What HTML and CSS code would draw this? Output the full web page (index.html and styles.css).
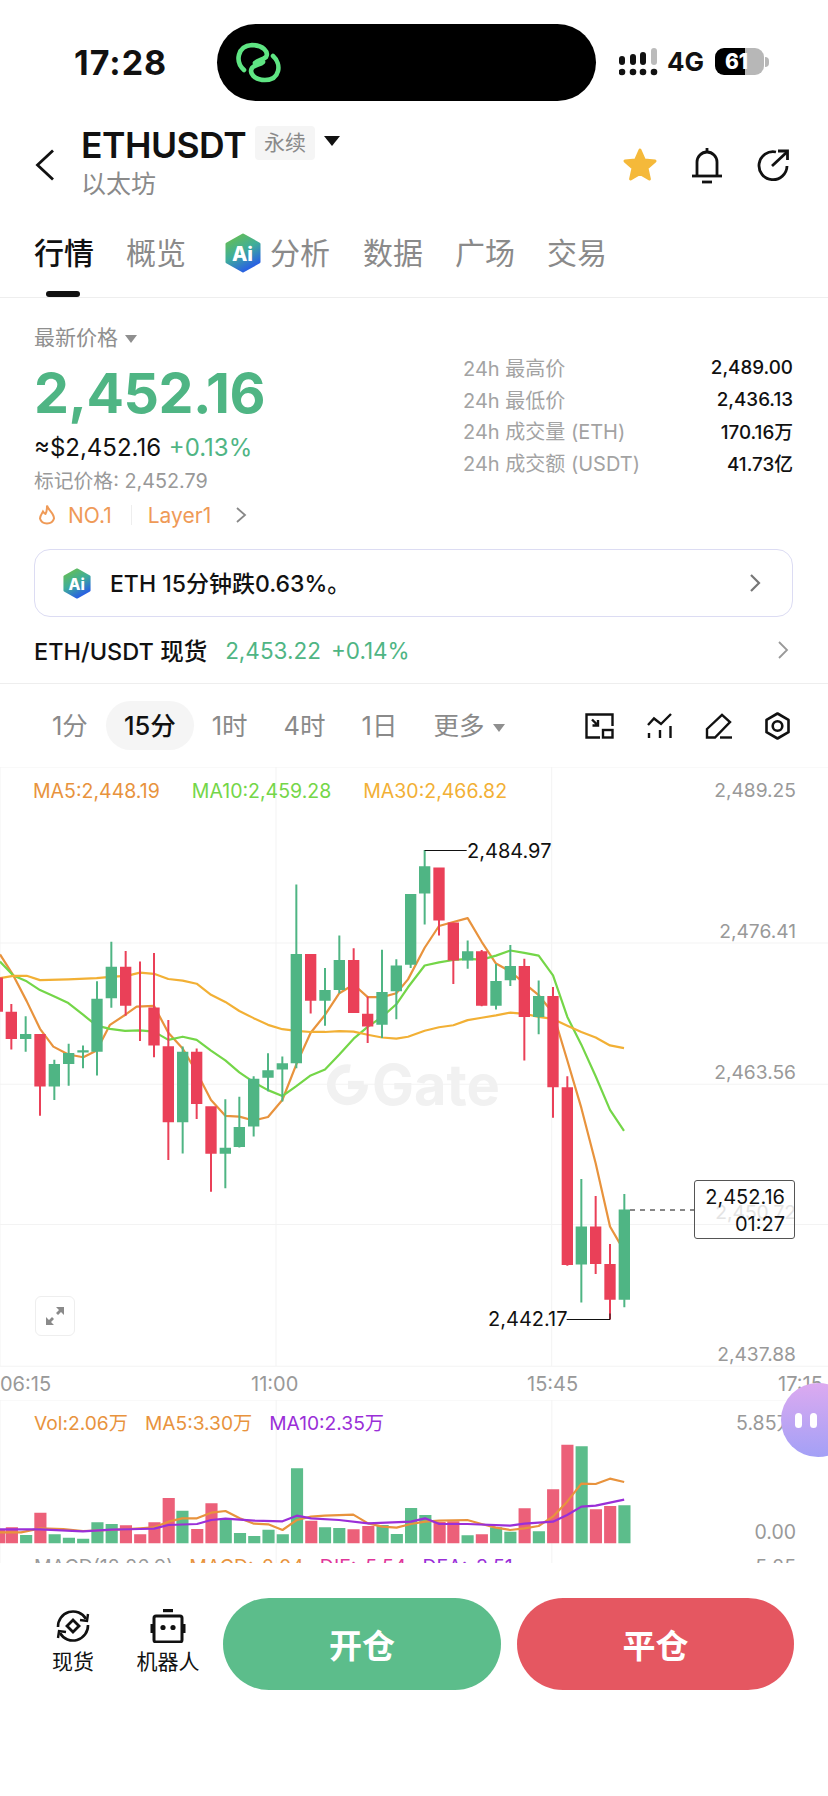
FILE: index.html
```html
<!DOCTYPE html>
<html lang="zh-CN">
<head>
    <meta charset="UTF-8">
    <meta name="viewport" content="width=device-width, initial-scale=1.0">
    <title>ETHUSDT</title>
    <link rel="stylesheet" href="styles.css">
</head>
<body>

    <svg class="defs" width="0" height="0">
        <defs>
            <linearGradient id="aiGrad" x1="0" y1="0" x2="0.5" y2="1">
                <stop offset="0" stop-color="#6cc04a"/>
                <stop offset="0.55" stop-color="#3fae9a"/>
                <stop offset="1" stop-color="#2a63e0"/>
            </linearGradient>
            <symbol id="aiIcon" viewBox="0 0 36 40">
                <path d="M18 2 L34 11 V29 L18 38 L2 29 V11 Z" fill="url(#aiGrad)" stroke="url(#aiGrad)" stroke-width="3" stroke-linejoin="round"/>
                <text x="17.5" y="28" class="ai-text">Ai</text>
            </symbol>
        </defs>
    </svg>

    <div class="status">
        <span class="clock">17:28</span>
        <div class="island">
            <svg width="50" height="42" viewBox="0 0 50 42" fill="none" stroke="#5fe583" stroke-width="4.6" stroke-linecap="round">
                <path d="M10 28 C1 20 3 4 18 3 C29 3 35 10 32 15 C29 18 24 18 21 21"/>
                <path d="M39 14 C48 22 46 38 31 38 C20 38 15 31 18 26 C21 22 26 23 29 20"/>
            </svg>
        </div>
        <div class="status-right">
            <svg width="40" height="28" viewBox="0 0 40 28" fill="#111">
                <rect x="0" y="8" width="6" height="9" rx="3"/><rect x="11" y="6" width="6" height="11" rx="3"/>
                <rect x="21" y="4" width="6" height="13" rx="3"/><rect x="32" y="0" width="6" height="17" rx="3" fill="#bbb"/>
                <circle cx="3" cy="24" r="3.3"/><circle cx="14" cy="24" r="3.3"/>
                <circle cx="24" cy="24" r="3.3"/><circle cx="35" cy="24" r="3.3"/>
            </svg>
            <span class="net">4G</span>
            <span class="battery">61</span>
            <span class="battery-nub"></span>
        </div>
    </div>

    <div class="header">
        <svg class="back" width="22" height="32" viewBox="0 0 22 32" fill="none" stroke="#111" stroke-width="2.8">
            <path d="M19 1.5 L3.5 16 L19 30.5"/>
        </svg>
        <div class="title-block">
            <div class="title-line">
                <span class="symbol">ETHUSDT</span>
                <span class="tag">永续</span>
                <span class="tri"></span>
            </div>
            <div class="coin-name">以太坊</div>
        </div>
        <div class="header-icons">
            <svg width="36" height="36" viewBox="0 0 36 36" fill="#f5b93a" stroke="#f5b93a" stroke-width="3" stroke-linejoin="round">
                <path d="M18 3 L22.4 13 L33 14 L25 21 L27.4 32 L18 26.4 L8.6 32 L11 21 L3 14 L13.6 13 Z"/>
            </svg>
            <svg width="32" height="37" viewBox="0 0 32 37" fill="none" stroke="#111" stroke-width="2.8">
                <path d="M6 28 V15 a10 10 0 0 1 20 0 V28"/>
                <path d="M1 29 H31"/>
                <path d="M11 35 H21"/>
                <path d="M16 1 V4"/>
            </svg>
            <svg width="34" height="34" viewBox="0 0 34 34" fill="none" stroke="#111" stroke-width="2.8">
                <path d="M20 4 A14 14 0 1 0 31 18"/>
                <path d="M16 18 L31 4"/>
                <path d="M22 3 H31.5 V12"/>
            </svg>
        </div>
    </div>

    <div class="tabs">
        <span class="tab active">行情</span>
        <span class="tab">概览</span>
        <span class="tab tab-ai">
            <svg width="36" height="40"><use href="#aiIcon"/></svg>
            分析
        </span>
        <span class="tab">数据</span>
        <span class="tab">广场</span>
        <span class="tab">交易</span>
    </div>

    <div class="price-section">
        <div class="price-left">
            <div class="last-label">最新价格 <span class="tri-small"></span></div>
            <div class="last-price">2,452.16</div>
            <div class="usd-line">≈$2,452.16 <span class="green">+0.13%</span></div>
            <div class="mark-price">标记价格: 2,452.79</div>
            <div class="rank-line">
                <svg width="20" height="22" viewBox="0 0 20 22" fill="none" stroke="#ef9a57" stroke-width="2">
                    <path d="M10 1.5 C11 6 17 9 17 14.5 A7.2 6.5 0 0 1 3 14.5 C3 11.5 5 9.5 6 7.5 C7 9 7.5 10 8.5 10 C10 8 10 4.5 10 1.5 Z"/>
                </svg>
                <span>NO.1</span>
                <span class="rank-sep"></span>
                <span>Layer1</span>
                <svg class="rank-arrow" width="12" height="18" viewBox="0 0 12 18" fill="none" stroke="#888" stroke-width="1.8">
                    <path d="M2 2 L10 9 L2 16"/>
                </svg>
            </div>
        </div>
        <div class="stats">
            <div class="stat"><span>24h 最高价</span><b>2,489.00</b></div>
            <div class="stat"><span>24h 最低价</span><b>2,436.13</b></div>
            <div class="stat"><span>24h 成交量 (ETH)</span><b>170.16万</b></div>
            <div class="stat"><span>24h 成交额 (USDT)</span><b>41.73亿</b></div>
        </div>
    </div>

    <div class="ai-banner">
        <svg width="28" height="31"><use href="#aiIcon"/></svg>
        <span class="ai-msg">ETH 15分钟跌0.63%。</span>
        <svg width="12" height="20" viewBox="0 0 12 20" fill="none" stroke="#777" stroke-width="2.2">
            <path d="M2 2 L10 10 L2 18"/>
        </svg>
    </div>

    <div class="spot-row">
        <span class="spot-name">ETH/USDT 现货</span>
        <span class="green spot-price">2,453.22</span>
        <span class="green spot-price">+0.14%</span>
        <svg class="spot-arrow" width="12" height="20" viewBox="0 0 12 20" fill="none" stroke="#999" stroke-width="1.8">
            <path d="M2 2 L10 10 L2 18"/>
        </svg>
    </div>

    <div class="timeframes">
        <span class="tf">1分</span>
        <span class="tf current">15分</span>
        <span class="tf">1时</span>
        <span class="tf">4时</span>
        <span class="tf">1日</span>
        <span class="tf">更多 <span class="tri-small"></span></span>
        <div class="tools">
            <svg width="29" height="26" viewBox="0 0 29 26" fill="none" stroke="#111" stroke-width="2.4">
                <path d="M15 24.5 H1.5 V1.5 H27.5 V13"/>
                <rect x="18" y="17" width="9.5" height="7.5"/>
                <path d="M7 6.5 L13 12.5 M13 7 V12.5 H7.5"/>
            </svg>
            <svg width="25" height="26" viewBox="0 0 25 26" fill="none" stroke="#111" stroke-width="2.4">
                <path d="M1 12 L7 5.5 L14 11 L24 1"/>
                <path d="M2 25 V20 M13 25 V17 M23.5 25 V13"/>
            </svg>
            <svg width="27" height="26" viewBox="0 0 27 26" fill="none" stroke="#111" stroke-width="2.4">
                <path d="M2 16 L17 1.8 L25 9 L10 24.5 H2 Z"/>
                <path d="M15 24.5 H27"/>
            </svg>
            <svg width="25" height="28" viewBox="0 0 25 28" fill="none" stroke="#111" stroke-width="2.6">
                <path d="M12.5 1.5 L23.5 7.8 V20.2 L12.5 26.5 L1.5 20.2 V7.8 Z" stroke-linejoin="round"/>
                <circle cx="12.5" cy="14" r="4.8"/>
            </svg>
        </div>
    </div>

    <div class="chart-area">
        <div class="kline">
            <svg class="kline-svg" viewBox="0 18 2484 1550" preserveAspectRatio="none">
                <path class="grid-line" d="M0 463H2484M0 820H2484M0 1175H2484M0 18H2484M0 1533H2484M828 18V1533M1655 18V1533M0 18V1533"/>
                <path class="ma ma5" d="M0 492L40 545L80 610L120 680L160 725L205 745L250 752L290 735L330 670L375 645L410 624L462 622L505 690L548 730L590 790L633 860L676 900L718 902L761 912L804 903L847 860L889 770L932 690L975 645L1018 590L1061 568L1103 600L1146 600L1189 590L1224 555L1274 475L1317 420L1360 410L1403 400L1445 460L1488 515L1531 535L1573 565L1616 595L1659 640L1702 760L1744 880L1787 1020L1830 1180L1859 1222"/>
                <path class="ma ma10" d="M0 510L40 545L80 560L120 582L160 597L205 615L250 645L290 672L330 680L375 685L420 684L462 687L505 708L548 700L590 708L633 735L676 760L718 790L761 815L804 835L847 850L889 825L932 798L975 783L1018 745L1061 705L1103 675L1146 650L1189 618L1224 575L1274 520L1317 512L1360 506L1403 503L1445 505L1488 495L1531 482L1573 488L1616 495L1659 545L1702 650L1744 720L1787 800L1830 885L1872 938"/>
                <path class="ma ma30" d="M0 552L40 546L80 546L120 557L205 555L290 552L340 548L380 546L420 538L462 541L505 554L548 558L590 566L633 594L676 612L718 635L761 653L804 670L847 681L889 685L932 688L975 688L1018 686L1061 687L1103 695L1146 702L1189 705L1224 700L1274 685L1317 676L1360 671L1403 658L1445 652L1488 646L1531 639L1573 642L1616 650L1659 655L1702 672L1744 688L1787 702L1830 722L1872 729"/>
                <path class="candle-down" d="M-8 550h17V637h-17zM17 637h34V706h-34zM31 617h6V732h-6zM103 693h34V826h-34zM117 693h6V900h-6zM360 523h34V622h-34zM374 483h6V647h-6zM417 510h6V711h-6zM445 626h34V722h-34zM459 488h6V752h-6zM488 724h34V916h-34zM502 658h6V1012h-6zM573 738h34V870h-34zM587 730h6V908h-6zM616 876h34V996h-34zM630 876h6V1092h-6zM915 491h34V609h-34zM929 491h6V641h-6zM1044 506h34V640h-34zM1058 476h6V640h-6zM1086 642h34V674h-34zM1100 598h6V716h-6zM1300 272h34V406h-34zM1314 272h6V444h-6zM1343 411h34V507h-34zM1357 411h6V567h-6zM1428 484h34V622h-34zM1442 481h6V623h-6zM1556 521h34V650h-34zM1570 503h6V760h-6zM1642 597h34V828h-34zM1656 574h6V905h-6zM1685 828h34V1277h-34zM1699 800h6V1279h-6zM1770 1180h34V1275h-34zM1784 1103h6V1300h-6zM1813 1275h34V1365h-34zM1827 1224h6V1415h-6z"/>
                <path class="candle-up" d="M60 693h34V706h-34zM74 648h6V738h-6zM146 769h34V826h-34zM160 758h6V860h-6zM189 741h34V769h-34zM203 718h6V824h-6zM232 734h34V740h-34zM246 722h6V780h-6zM274 604h34V738h-34zM288 560h6V798h-6zM317 523h34V603h-34zM331 460h6V627h-6zM531 738h34V916h-34zM545 725h6V995h-6zM659 981h34V996h-34zM673 858h6V1083h-6zM701 928h34V979h-34zM715 852h6V980h-6zM744 806h34V927h-34zM758 800h6V952h-6zM787 785h34V804h-34zM801 742h6V838h-6zM830 767h34V783h-34zM844 750h6V864h-6zM872 491h34V767h-34zM886 315h6V780h-6zM958 582h34V609h-34zM972 526h6V672h-6zM1001 506h34V582h-34zM1015 444h6V590h-6zM1129 587h34V670h-34zM1143 480h6V703h-6zM1172 520h34V585h-34zM1186 504h6V656h-6zM1215 339h34V518h-34zM1229 339h6V526h-6zM1257 269h34V338h-34zM1271 228h6V416h-6zM1386 484h34V507h-34zM1400 457h6V528h-6zM1471 559h34V622h-34zM1485 516h6V631h-6zM1514 521h34V557h-34zM1528 468h6V572h-6zM1599 597h34V650h-34zM1613 558h6V694h-6zM1727 1180h34V1276h-34zM1741 1060h6V1372h-6zM1856 1137h34V1365h-34zM1870 1098h6V1384h-6z"/>
                <path class="leader" d="M1274 229H1400M1830 1415H1700M1830 1415V1400"/>
                <path class="dash" d="M1890 1138H2085"/>
            </svg>

            <div class="watermark">
                <svg width="42" height="42" viewBox="0 0 40 40" fill="none" stroke="#f1f1f1" stroke-width="8">
                    <path d="M35 20 A15.5 15.5 0 1 1 22 4.5"/>
                    <path d="M20 20 H35"/>
                </svg>
                <span>Gate</span>
            </div>

            <div class="ma-legend">
                <span class="c-ma5">MA5:2,448.19</span>
                <span class="c-ma10">MA10:2,459.28</span>
                <span class="c-ma30">MA30:2,466.82</span>
            </div>

            <span class="axis-y y1">2,489.25</span>
            <span class="axis-y y2">2,476.41</span>
            <span class="axis-y y3">2,463.56</span>
            <span class="axis-y y4">2,450.72</span>
            <span class="axis-y y5">2,437.88</span>

            <span class="extreme high">2,484.97</span>
            <span class="extreme low">2,442.17</span>

            <div class="last-box">
                <span>2,452.16</span>
                <span>01:27</span>
            </div>

            <div class="expand">
                <svg width="20" height="20" viewBox="0 0 20 20" fill="#8a8a8a">
                    <path d="M11 1 H19 V9 L16 6 L13 9 L11 7 L14 4 Z"/>
                    <path d="M9 19 H1 V11 L4 14 L7 11 L9 13 L6 16 Z"/>
                </svg>
            </div>
        </div>

        <div class="time-axis">
            <span class="t1">06:15</span>
            <span class="t2">11:00</span>
            <span class="t3">15:45</span>
            <span class="t4">17:15</span>
        </div>

        <div class="vol">
            <svg class="vol-svg" viewBox="0 90 1568 489" preserveAspectRatio="none">
                <path class="grid-line" d="M523 90V579M1045 90V579M0 90V579M0 90H1568"/>
                <path class="bar-down" d="M-2 480h12V520h-12zM11 472h23V520h-23zM65 428h23V520h-23zM227 466h23V520h-23zM254 493h23V520h-23zM281 457h23V520h-23zM308 384h23V520h-23zM362 477h23V520h-23zM389 400h23V520h-23zM578 452h23V520h-23zM658 478h23V520h-23zM686 468h23V520h-23zM821 456h23V520h-23zM847 454h23V520h-23zM901 493h23V520h-23zM982 415h23V520h-23zM1036 358h23V520h-23zM1063 224h23V520h-23zM1117 418h23V520h-23zM1144 408h23V520h-23z"/>
                <path class="bar-up" d="M38 495h23V520h-23zM92 493h23V520h-23zM119 503h23V520h-23zM146 506h23V520h-23zM173 457h23V520h-23zM200 462h23V520h-23zM334 422h23V520h-23zM416 445h23V520h-23zM443 489h23V520h-23zM470 498h23V520h-23zM497 479h23V520h-23zM524 493h23V520h-23zM551 295h23V520h-23zM604 472h23V520h-23zM631 474h23V520h-23zM713 465h23V520h-23zM740 492h23V520h-23zM767 414h23V520h-23zM794 435h23V520h-23zM874 496h23V520h-23zM928 472h23V520h-23zM955 485h23V520h-23zM1009 484h23V520h-23zM1090 229h23V520h-23zM1171 406h23V520h-23z"/>
                <path class="ma vol5" d="M0 487L40 487L76 475L120 477L157 483L211 480L265 475L292 472L319 455L345 445L373 445L400 428L427 423L454 445L481 461L508 463L535 480L562 450L589 440L615 437L669 434L697 460L724 470L751 473L778 462L805 455L832 452L885 450L912 462L939 473L966 480L993 475L1020 468L1047 440L1074 395L1101 341L1128 342L1155 326L1182 336"/>
                <path class="ma vol10" d="M0 478L76 478L157 484L211 479L265 477L292 476L319 465L373 462L400 450L427 446L481 452L535 454L562 437L589 445L642 450L697 460L778 455L805 445L832 462L885 462L966 467L993 461L1047 455L1074 435L1101 410L1128 407L1182 389"/>
            </svg>
            <div class="vol-legend">
                <span class="c-ma5">Vol:2.06万</span>
                <span class="c-ma5">MA5:3.30万</span>
                <span class="c-purple">MA10:2.35万</span>
            </div>
            <span class="axis-v v1">5.85万</span>
            <span class="axis-v v2">0.00</span>
            <div class="macd-legend">
                <span class="c-gray">MACD(12,26,9)</span>
                <span class="c-ma5">MACD:-2.04</span>
                <span class="c-pink">DIF:-5.54</span>
                <span class="c-purple">DEA:-3.51</span>
            </div>
            <span class="axis-v v3">5.25</span>
        </div>

        <div class="floater"><i></i><i></i></div>
    </div>

    <div class="bottom-bar">
        <div class="bottom-item item-spot">
            <svg width="36" height="34" viewBox="0 0 36 34" fill="none" stroke="#111" stroke-width="2.6">
                <path d="M3 18 A15 15 0 0 1 31 10"/>
                <path d="M33 16 A15 15 0 0 1 5 24"/>
                <path d="M33 5 L32 12 L25 11" stroke-width="2.4"/>
                <path d="M3 29 L4 22 L11 23" stroke-width="2.4"/>
                <path d="M18 11 L24 17 L18 23 L12 17 Z" stroke-width="2.8"/>
            </svg>
            <span>现货</span>
        </div>
        <div class="bottom-item item-bot">
            <svg width="36" height="34" viewBox="0 0 36 34" fill="#111">
                <rect x="13" y="0" width="10" height="3.2"/>
                <rect x="4" y="7" width="28" height="26" rx="2" fill="none" stroke="#111" stroke-width="3"/>
                <rect x="0.5" y="15" width="3.5" height="9"/>
                <rect x="32" y="15" width="3.5" height="9"/>
                <circle cx="13" cy="18.5" r="2.6"/>
                <circle cx="23" cy="18.5" r="2.6"/>
            </svg>
            <span>机器人</span>
        </div>
        <button class="btn btn-open">开仓</button>
        <button class="btn btn-close">平仓</button>
    </div>

</body>
</html>
```

FILE: styles.css
```css
* {
    box-sizing: border-box;
}
body {
    margin: 0;
    width: 828px;
    height: 1796px;
    overflow: hidden;
    position: relative;
    background: white;
    color: #111;
    font-family: Inter, "Noto Sans CJK SC", sans-serif;
}
.defs {
    position: absolute;
}
.ai-text {
    fill: white;
    font-family: Inter, sans-serif;
    font-weight: 800;
    font-size: 20px;
    text-anchor: middle;
}
.green {
    color: #4fb584;
}

/* status bar */
.status {
    display: flex;
    height: 77px;
    margin-top: 24px;
    padding-left: 74px;
    align-items: center;
}
.clock {
    width: 143px;
    font-size: 34px;
    font-weight: 700;
    letter-spacing: 1px;
    margin-top: -1px;
}
.island {
    width: 379px;
    height: 77px;
    border-radius: 39px;
    background: black;
    padding-left: 17px;
    display: flex;
    align-items: center;
}
.status-right {
    display: flex;
    align-items: center;
    margin-left: 23px;
    margin-top: -2px;
}
.net {
    font-size: 26px;
    font-weight: 700;
    margin-left: 8px;
    width: 48px;
}
.battery {
    width: 49px;
    height: 27px;
    border-radius: 9px;
    background: linear-gradient(90deg, black 62%, #b7b7b7 62%);
    color: white;
    font-size: 21px;
    font-weight: 800;
    line-height: 27px;
    text-align: center;
    padding-right: 6px;
}
.battery-nub {
    width: 4px;
    height: 10px;
    margin-left: 1px;
    background: #b7b7b7;
    border-radius: 0 5px 5px 0;
}

/* header */
.header {
    display: flex;
    align-items: center;
    height: 102px;
    margin-top: 13px;
    padding: 0 38px 0 34px;
    position: relative;
}
.back {
    flex: none;
}
.title-block {
    margin-left: 25px;
    margin-top: -6px;
}
.title-line {
    display: flex;
    align-items: center;
    height: 40px;
}
.symbol {
    font-size: 35.5px;
    font-weight: 600;
    letter-spacing: -0.5px;
}
.tag {
    margin-left: 9px;
    width: 60px;
    height: 34px;
    line-height: 34px;
    font-size: 21px;
    text-align: center;
    color: #8a8a8a;
    background: #f5f5f5;
    border-radius: 4px;
    margin-top: -5px;
}
.tri {
    margin-left: 9px;
    margin-top: -8px;
    border-left: 8px solid transparent;
    border-right: 8px solid transparent;
    border-top: 10px solid #111;
}
.coin-name {
    font-size: 25px;
    line-height: 30px;
    margin-top: 4px;
    color: #8a8a8a;
}
.header-icons {
    margin-left: auto;
    display: flex;
    align-items: center;
    gap: 33px;
}

/* tabs */
.tabs {
    display: flex;
    gap: 32px;
    height: 82px;
    padding: 17px 0 0 34px;
    border-bottom: 1px solid #eeeeee;
    position: relative;
}
.tab {
    font-size: 30px;
    line-height: 40px;
    color: #8a8a8a;
    display: flex;
    gap: 9px;
    position: relative;
}
.tab.active {
    color: #111;
    font-weight: 500;
}
.tab.active::after {
    content: "";
    position: absolute;
    left: 12px;
    top: 58px;
    width: 34px;
    height: 6px;
    border-radius: 3px;
    background: #111;
}
.tab-ai {
    margin-left: 7px;
    margin-right: 1px;
}

/* price block */
.price-section {
    display: flex;
    justify-content: space-between;
    height: 232px;
    padding: 25px 35px 0 34px;
}
.last-label {
    font-size: 21px;
    line-height: 30px;
    color: #8f8f8f;
}
.tri-small {
    display: inline-block;
    vertical-align: middle;
    margin-left: 1px;
    border-left: 6px solid transparent;
    border-right: 6px solid transparent;
    border-top: 8px solid #8f8f8f;
}
.last-price {
    margin-top: 10px;
    font-size: 55.5px;
    line-height: 60px;
    font-weight: 700;
    color: #4fb584;
    letter-spacing: -0.5px;
}
.usd-line {
    margin-top: 11px;
    font-size: 24px;
    line-height: 28px;
}
.usd-line .green {
    margin-left: 1px;
}
.mark-price {
    margin-top: 6px;
    font-size: 19.8px;
    line-height: 26px;
    color: #999999;
}
.rank-line {
    margin-top: 7px;
    display: flex;
    align-items: center;
    height: 28px;
    font-size: 21px;
    color: #ef9a57;
    padding-left: 3px;
}
.rank-line span:first-of-type {
    margin-left: 11px;
}
.rank-sep {
    width: 1px;
    height: 20px;
    margin: 0 16px 0 19px;
    background: #eeeeee;
}
.rank-arrow {
    margin-left: 24px;
}
.stats {
    width: 330px;
    padding-top: 29px;
}
.stat {
    display: flex;
    justify-content: space-between;
    align-items: center;
    height: 31.5px;
    font-size: 20px;
    color: #a3a3a3;
}
.stat b {
    font-weight: 500;
    color: #111;
    font-size: 18.8px;
}

/* AI banner */
.ai-banner {
    display: flex;
    align-items: center;
    height: 68px;
    margin: 19px 35px 0 34px;
    padding: 0 31px 0 28px;
    border: 1.5px solid #dcdcf3;
    border-radius: 16px;
}
.ai-msg {
    flex: 1;
    font-size: 23px;
    font-weight: 500;
    margin-left: 19px;
    margin-top: -2px;
}

/* spot row */
.spot-row {
    display: flex;
    align-items: center;
    height: 67px;
    padding: 0 39px 0 34px;
    border-bottom: 1px solid #eeeeee;
}
.spot-name {
    font-size: 23.5px;
    font-weight: 500;
    margin-right: 18px;
}
.spot-price {
    font-size: 22.5px;
    margin-right: 10px;
}
.spot-arrow {
    margin-left: auto;
}

/* timeframe row */
.timeframes {
    display: flex;
    align-items: center;
    height: 83px;
    padding: 0 38px 0 34px;
}
.tf {
    height: 49px;
    line-height: 49px;
    padding: 0 18px;
    font-size: 25.5px;
    color: #8a8a8a;
    white-space: nowrap;
}
.tf.current {
    color: #111;
    font-weight: 500;
    background: #f5f5f5;
    border-radius: 25px;
}
.tools {
    margin-left: auto;
    display: flex;
    align-items: center;
    gap: 33px;
}

/* chart */
.chart-area {
    position: relative;
    height: 796px;
    overflow: hidden;
}
.kline {
    position: relative;
    height: 599px;
}
.kline-svg {
    position: absolute;
    left: 0;
    top: 0;
    width: 828px;
    height: 613px;
}
.grid-line {
    fill: none;
    stroke: #f3f3f3;
    stroke-width: 1;
    vector-effect: non-scaling-stroke;
}
.ma {
    fill: none;
    stroke-width: 2.2;
    stroke-linejoin: round;
    vector-effect: non-scaling-stroke;
}
.ma5 {
    stroke: #e8933d;
}
.ma10 {
    stroke: #74d648;
}
.ma30 {
    stroke: #f2b035;
}
.candle-down {
    fill: #ea4058;
}
.candle-up {
    fill: #4fb584;
}
.leader {
    fill: none;
    stroke: #111;
    stroke-width: 1;
    vector-effect: non-scaling-stroke;
}
.dash {
    fill: none;
    stroke: #111;
    stroke-width: 1;
    stroke-dasharray: 5 5;
    vector-effect: non-scaling-stroke;
}
.watermark {
    position: absolute;
    left: 327px;
    top: 296px;
    display: flex;
    align-items: center;
    gap: 3px;
    font-size: 56px;
    font-weight: 700;
    color: #f1f1f1;
    line-height: 44px;
}
.ma-legend {
    position: absolute;
    left: 33px;
    top: 12px;
    display: flex;
    font-size: 19.5px;
    line-height: 24px;
}
.ma-legend span {
    margin-right: 32px;
}
.c-ma5 {
    color: #e8933d;
}
.c-ma10 {
    color: #74d648;
}
.c-ma30 {
    color: #f2b035;
}
.c-purple {
    color: #9a2fd8;
}
.c-pink {
    color: #e0359a;
}
.c-gray {
    color: #999999;
}
.axis-y {
    position: absolute;
    right: 32px;
    font-size: 19.2px;
    line-height: 24px;
    color: #999999;
}
.y1 { top: 11px; }
.y2 { top: 152px; }
.y3 { top: 293px; }
.y4 { top: 433px; color: #e4e4e4; }
.y5 { top: 575px; }
.extreme {
    position: absolute;
    font-size: 20px;
    line-height: 24px;
    color: #111;
}
.high {
    left: 467px;
    top: 72px;
}
.low {
    left: 488px;
    top: 540px;
}
.last-box {
    position: absolute;
    left: 694px;
    top: 413px;
    width: 101px;
    height: 59px;
    padding: 3px 9px 0 0;
    border: 1px solid #555555;
    border-radius: 3px;
    display: flex;
    flex-direction: column;
    align-items: flex-end;
    font-size: 20px;
    line-height: 27px;
}
.expand {
    position: absolute;
    left: 35px;
    top: 529px;
    width: 40px;
    height: 40px;
    border: 1.5px solid #eeeeee;
    border-radius: 6px;
    display: flex;
    align-items: center;
    justify-content: center;
}
.time-axis {
    position: relative;
    height: 34px;
    font-size: 20px;
    line-height: 36px;
    color: #999999;
}
.time-axis span {
    position: absolute;
    top: 0;
}
.t1 { left: 0; }
.t2 { left: 251px; }
.t3 { left: 527px; }
.t4 { left: 778px; }
.vol {
    position: relative;
    height: 163px;
    overflow: hidden;
}
.vol-svg {
    position: absolute;
    left: 0;
    top: 0;
    width: 828px;
    height: 163px;
}
.bar-down {
    fill: #ec6079;
}
.bar-up {
    fill: #5cbd8b;
}
.vol5 {
    stroke: #e8933d;
}
.vol10 {
    stroke: #9a2fd8;
}
.vol-legend {
    position: absolute;
    left: 34px;
    top: 11px;
    display: flex;
    gap: 17px;
    font-size: 19.2px;
    line-height: 24px;
}
.axis-v {
    position: absolute;
    right: 32px;
    font-size: 19.5px;
    line-height: 24px;
    color: #999999;
}
.v1 { top: 11px; }
.v2 { top: 120px; }
.v3 { top: 155px; }
.macd-legend {
    position: absolute;
    left: 34px;
    top: 155px;
    display: flex;
    gap: 16px;
    font-size: 19.5px;
    line-height: 24px;
}
.floater {
    position: absolute;
    left: 781px;
    top: 616px;
    width: 74px;
    height: 74px;
    border-radius: 50%;
    background: linear-gradient(180deg, #dcaaf0, #a3a0f6);
    display: flex;
    gap: 8px;
    padding: 30px 0 0 14px;
}
.floater i {
    width: 7px;
    height: 15px;
    border-radius: 4px;
    background: white;
}

/* bottom bar */
.bottom-bar {
    display: flex;
    align-items: flex-start;
    padding: 35px 0 0 48px;
}
.bottom-item {
    display: flex;
    flex-direction: column;
    align-items: center;
    padding-top: 11px;
    font-size: 21px;
    white-space: nowrap;
}
.bottom-item span {
    margin-top: 4px;
    line-height: 30px;
}
.item-spot {
    width: 50px;
    margin-right: 38px;
}
.item-bot {
    width: 64px;
    margin-right: 23px;
}
.btn {
    width: 278px;
    height: 92px;
    border: none;
    border-radius: 46px;
    color: white;
    font-family: inherit;
    font-size: 33px;
    font-weight: 700;
}
.btn-open {
    background: #5cbd8b;
    margin-right: 16px;
}
.btn-close {
    background: #e55761;
    width: 277px;
}
```
